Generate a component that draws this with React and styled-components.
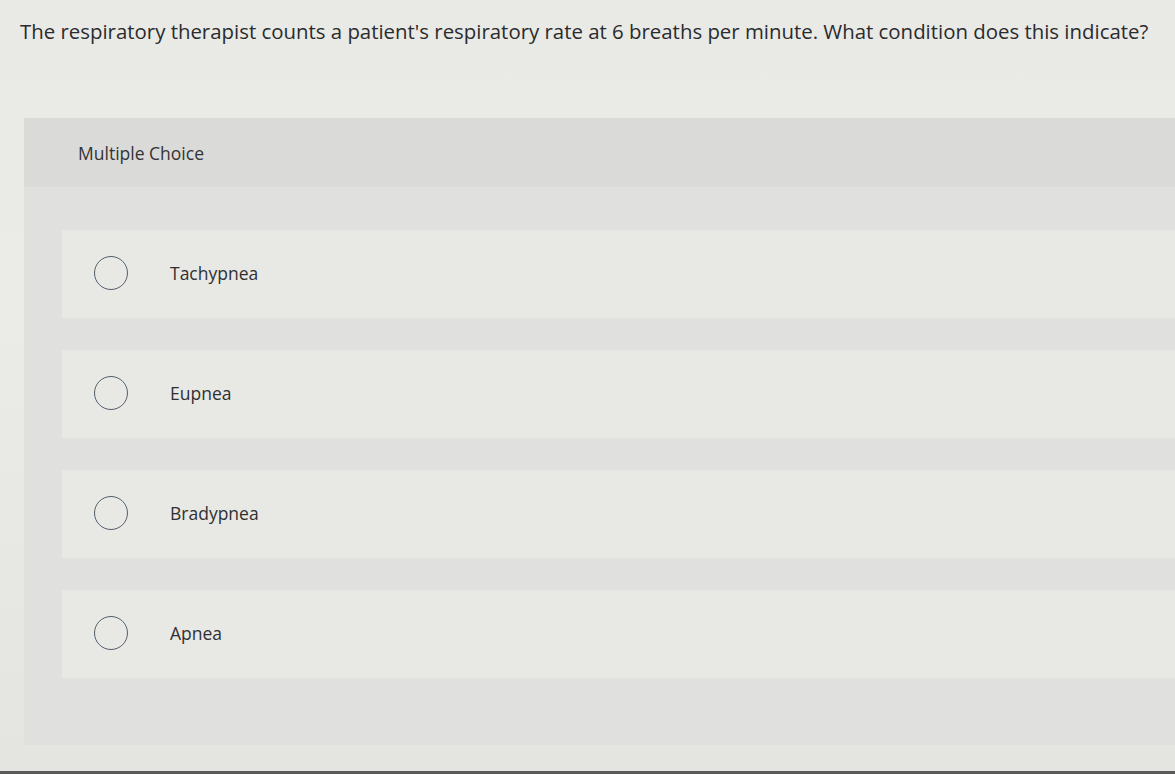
import React from "react";
import styled, { createGlobalStyle } from "styled-components";

const Global = createGlobalStyle`
  html, body { margin: 0; padding: 0; }
  body {
    background: #e8e8e5;
    font-family: "Open Sans", "Liberation Sans", sans-serif;
    color: #2e2f31;
  }
`;

const Page = styled.div`
  width: 1175px;
  height: 774px;
  overflow: hidden;
  display: flex;
  flex-direction: column;
  background: linear-gradient(180deg, #e9e9e6 0%, #ebebe8 40%, #e4e4e1 100%);
  border-bottom: 3px solid #5a5a58;
  box-sizing: border-box;
`;

const Question = styled.h1`
  margin: 0;
  padding: 17px 0 0 20px;
  height: 118px;
  flex-shrink: 0;
  box-sizing: border-box;
  font-size: 20.4px;
  font-weight: 400;
  line-height: 28px;
  color: #2a2b2d;
  white-space: nowrap;
`;

const Panel = styled.section`
  margin-left: 24px;
  height: 627px;
  flex-shrink: 0;
  background: #e0e0de;
  display: flex;
  flex-direction: column;
`;

const PanelHeader = styled.div`
  height: 69px;
  background: #dadad8;
  display: flex;
  align-items: center;
  padding-left: 54px;
  font-size: 17.5px;
  color: #333436;
`;

const Options = styled.div`
  display: flex;
  flex-direction: column;
  gap: 32px;
  padding: 43px 0 0 38px;
`;

const Option = styled.label`
  height: 88px;
  background: #e8e8e5;
  display: flex;
  align-items: center;
  padding-left: 32px;
  gap: 42px;
  cursor: pointer;
`;

const Radio = styled.span`
  width: 34px;
  height: 34px;
  margin-top: -3px;
  box-sizing: border-box;
  border-radius: 50%;
  border: 1.7px solid #52606a;
  background: transparent;
  flex-shrink: 0;
`;

const Label = styled.span`
  font-size: 17.5px;
  color: #2f3032;
  margin-top: -3px;
`;

const choices = ["Tachypnea", "Eupnea", "Bradypnea", "Apnea"];

export default function App() {
  return (
    <>
      <Global />
      <Page>
        <Question>
          The respiratory therapist counts a patient's respiratory rate at 6 breaths per minute. What condition does this indicate?
        </Question>
        <Panel>
          <PanelHeader>Multiple Choice</PanelHeader>
          <Options>
            {choices.map((c) => (
              <Option key={c}>
                <Radio />
                <Label>{c}</Label>
              </Option>
            ))}
          </Options>
        </Panel>
      </Page>
    </>
  );
}
